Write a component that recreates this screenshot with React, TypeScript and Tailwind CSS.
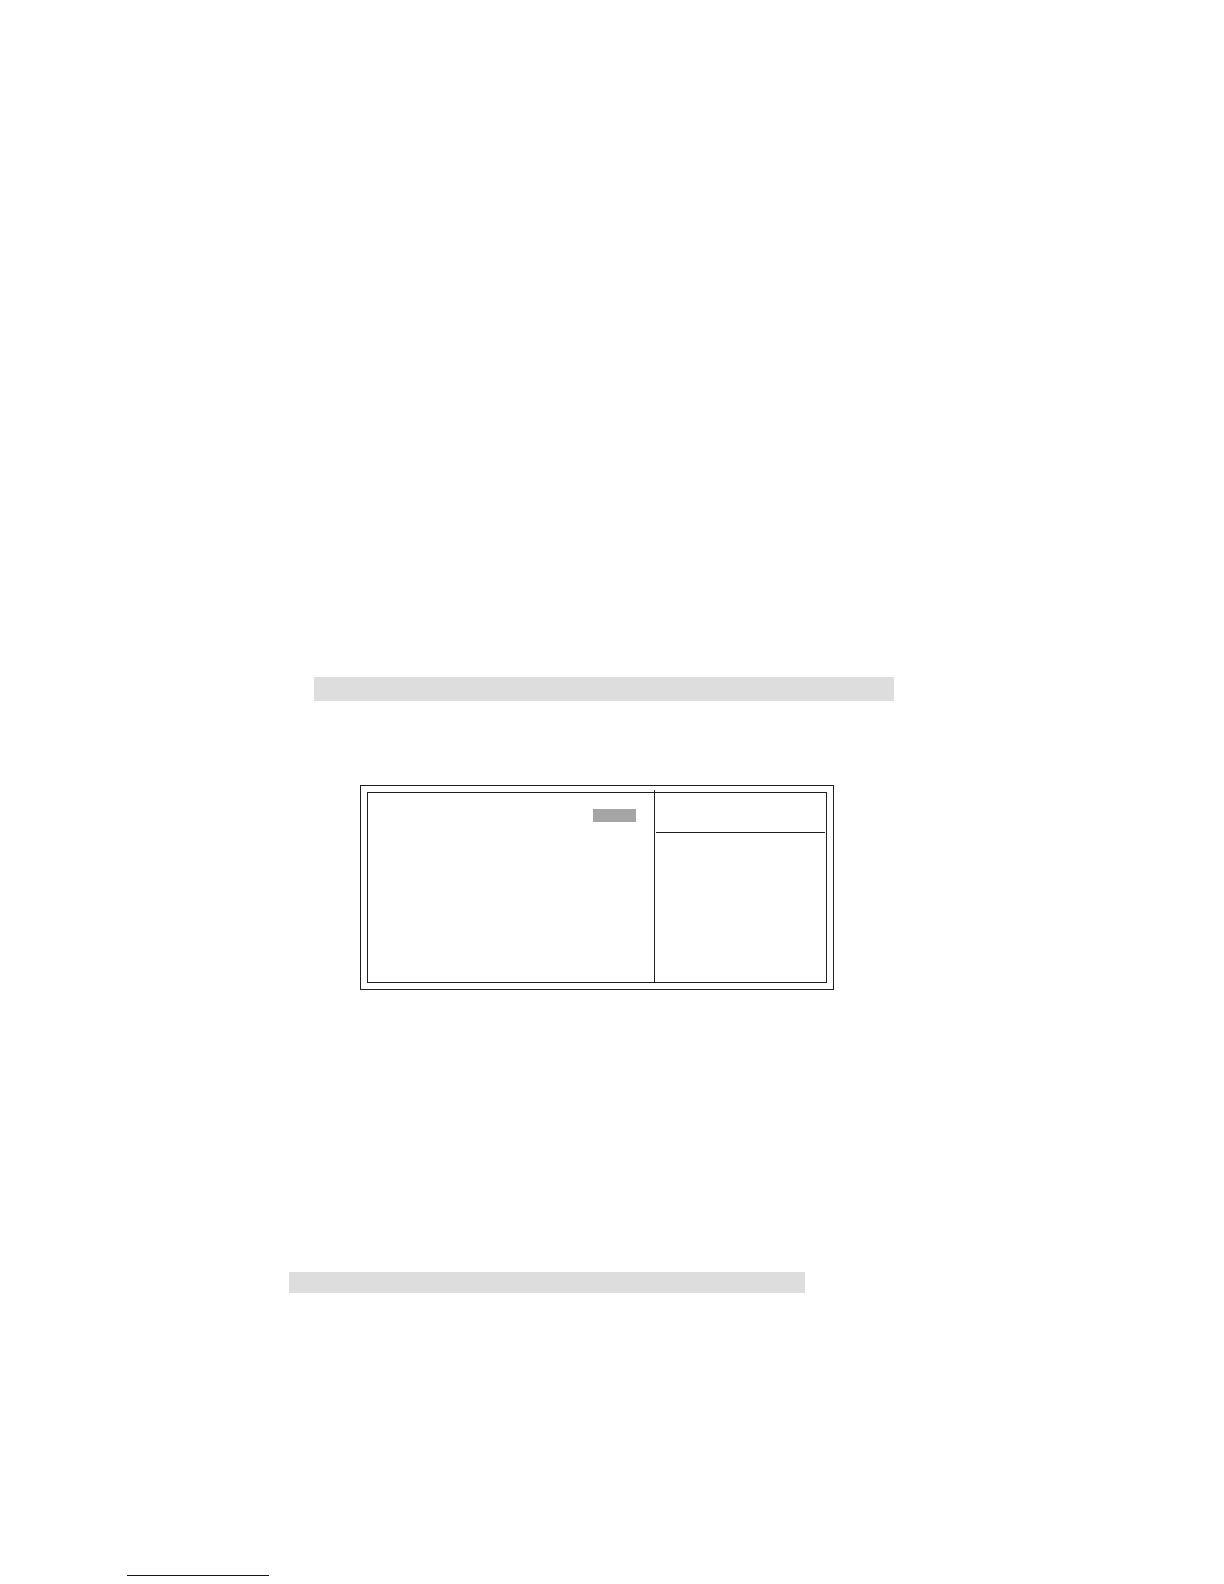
export default function App() {
  return (
    <main className="flex min-h-screen flex-col items-start bg-white pb-2 pt-[677px] font-['Liberation_Sans',sans-serif]">
      <header className="ml-[314px] flex w-full max-w-[580px] bg-[#dddddd] pt-6" />

      {/* Double-ruled setup panel with a value column and a help column */}
      <section className="ml-[360px] mt-[84px] w-full max-w-[474px] border border-[#231f20] p-1.5">
        <div className="grid grid-cols-[5fr_3fr] border border-[#231f20]">
          <div className="flex min-h-[189px] items-start justify-end px-[18px] pt-4">
            <div className="h-[13px] w-[43px] bg-[#a5a5a5]" />
          </div>
          <aside className="-mt-[3px] border-l border-[#231f20] px-px">
            <div className="h-[43px] border-b border-[#231f20]" />
          </aside>
        </div>
      </section>

      <section className="ml-[289px] mt-[282px] flex w-full max-w-[516px] bg-[#dddddd] pt-[21px]" />

      <footer className="ml-[127px] mt-auto w-full max-w-[142px] border-b border-[#0000b0]" />
    </main>
  );
}
